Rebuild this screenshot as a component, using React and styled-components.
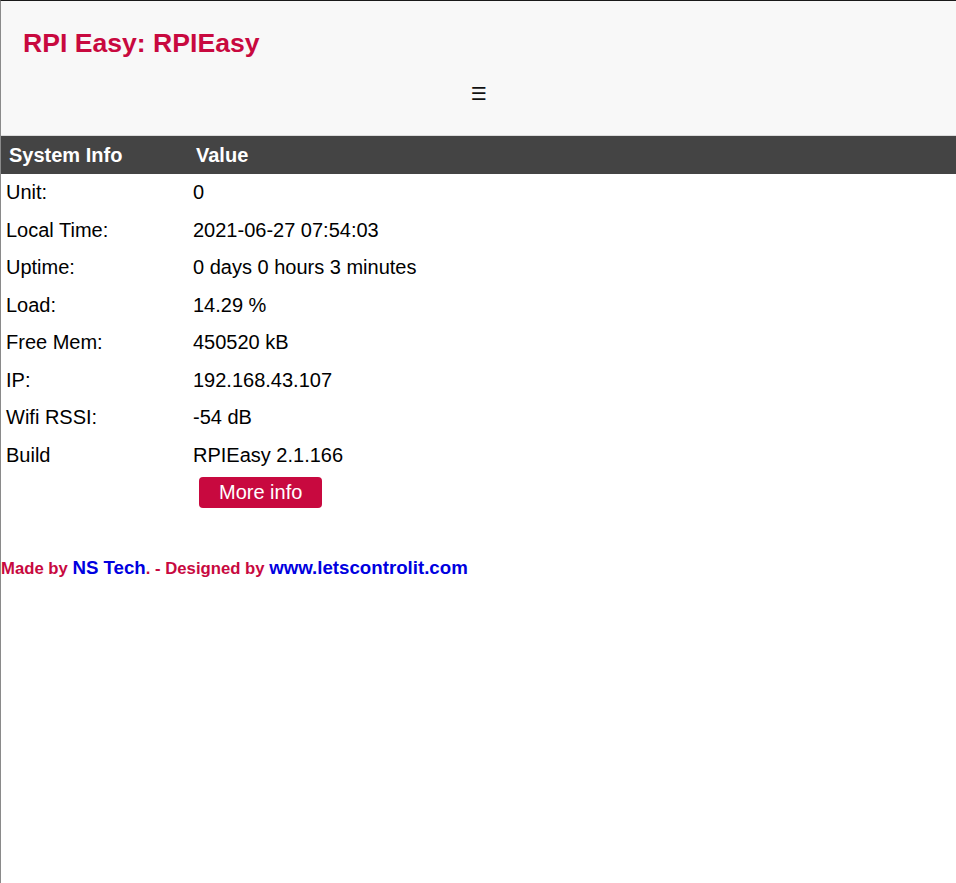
import React from "react";
import styled, { createGlobalStyle } from "styled-components";

const Global = createGlobalStyle`
  html, body { margin: 0; padding: 0; background: #fff; }
  body { font-family: "Liberation Sans", Arial, Helvetica, sans-serif; color: #000; }
`;

const Page = styled.div`
  min-height: 882px;
  border-top: 1px solid #1a1a1a;
  border-left: 1px solid #8a8a8a;
`;

const Header = styled.header`
  background: #f8f8f8;
  border-bottom: 1px solid #dcdcdc;
  height: 135px;
  box-sizing: border-box;
  padding: 24px 0 0 22px;
`;

const Title = styled.h1`
  margin: 0;
  font-size: 26.6px;
  font-weight: bold;
  line-height: 36px;
  color: #c8093f;
`;

const Nav = styled.div`
  display: flex;
  justify-content: center;
  margin-top: 21px;
  margin-left: -22px;
`;

const Burger = styled.span`
  font-family: "DejaVu Sans", sans-serif;
  font-size: 18px;
  line-height: 24px;
  color: #111;
`;

const Table = styled.table`
  width: 100%;
  border-collapse: collapse;
  border-spacing: 0;
`;

const Th = styled.th`
  background: #444;
  color: #fff;
  font-size: 20px;
  font-weight: bold;
  text-align: left;
  height: 38px;
  padding: 0 8px;
  width: ${(p) => p.$w || "auto"};
`;

const Td = styled.td`
  font-size: 20px;
  height: 37.5px;
  padding: 0 5px;
  vertical-align: middle;
`;

const Button = styled.button`
  margin: 2px 0 3px 6px;
  height: 31px;
  padding: 0 20px;
  background: #c8093f;
  color: #fff;
  border: none;
  border-radius: 4px;
  font-family: "Liberation Sans", Arial, sans-serif;
  font-size: 20px;
  line-height: 31px;
  cursor: pointer;
`;

const Footer = styled.div`
  margin-top: 44px;
  font-size: 16.7px;
  font-weight: bold;
  color: #c8093f;
  line-height: 24px;
`;

const Link = styled.a`
  color: #0000e0;
  font-size: 18.7px;
  text-decoration: none;
`;

const rows = [
  ["Unit:", "0"],
  ["Local Time:", "2021-06-27 07:54:03"],
  ["Uptime:", "0 days 0 hours 3 minutes"],
  ["Load:", "14.29 %"],
  ["Free Mem:", "450520 kB"],
  ["IP:", "192.168.43.107"],
  ["Wifi RSSI:", "-54 dB"],
  ["Build", "RPIEasy 2.1.166"],
];

export default function App() {
  return (
    <>
      <Global />
      <Page>
        <Header>
          <Title>RPI Easy: RPIEasy</Title>
          <Nav>
            <Burger>☰</Burger>
          </Nav>
        </Header>
        <Table>
          <thead>
            <tr>
              <Th $w="171px">System Info</Th>
              <Th>Value</Th>
            </tr>
          </thead>
          <tbody>
            {rows.map(([k, v]) => (
              <tr key={k}>
                <Td>{k}</Td>
                <Td>{v}</Td>
              </tr>
            ))}
            <tr>
              <Td />
              <Td>
                <Button>More info</Button>
              </Td>
            </tr>
          </tbody>
        </Table>
        <Footer>
          Made by <Link href="#">NS Tech</Link>. - Designed by{" "}
          <Link href="#">www.letscontrolit.com</Link>
        </Footer>
      </Page>
    </>
  );
}
